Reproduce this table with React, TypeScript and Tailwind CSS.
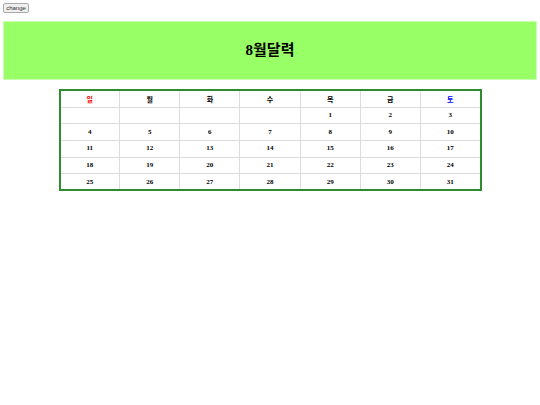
import React, { useState } from "react";

const days = ["일", "월", "화", "수", "목", "금", "토"];

function buildWeeks() {
  const cells: (number | null)[] = [null, null, null, null];
  for (let d = 1; d <= 31; d++) cells.push(d);
  const weeks: (number | null)[][] = [];
  for (let i = 0; i < cells.length; i += 7) weeks.push(cells.slice(i, i + 7));
  return weeks;
}

export default function App() {
  const [month, setMonth] = useState(8);
  const weeks = buildWeeks();

  return (
    <div className="min-h-[405px] bg-white font-['Liberation_Serif','Noto_Sans_CJK_KR',serif] text-black">
      <div className="px-[3px] pt-[3px]">
        <button
          onClick={() => setMonth(month === 8 ? 8 : 8)}
          className="flex h-[10px] w-[26px] items-center justify-center rounded-[2px] border border-[#aaa] bg-[#efefef] font-['Liberation_Sans',sans-serif] text-[6px] leading-none text-[#333]"
        >
          change
        </button>
      </div>
      <div className="mx-[3px] mt-[8px] flex h-[59px] items-center justify-center border border-[#c8ffb0] bg-[#99ff66]">
        <h1 className="text-[15px] font-bold leading-none">{month}월달력</h1>
      </div>
      <div className="mt-[9px] flex justify-center">
        <table className="w-[423px] table-fixed border-collapse border-2 border-[#2e8b2e] text-center text-[7px] font-bold">
          <thead>
            <tr className="h-[17px]">
              {days.map((d, i) => (
                <th
                  key={d}
                  className={`border border-[#dcdcdc] font-['Noto_Sans_CJK_KR',sans-serif] font-bold ${
                    i === 0 ? "text-[#ff0000]" : i === 6 ? "text-[#0000ff]" : "text-black"
                  }`}
                >
                  {d}
                </th>
              ))}
            </tr>
          </thead>
          <tbody>
            {weeks.map((w, wi) => (
              <tr key={wi} className="h-[16.7px]">
                {w.map((d, di) => (
                  <td key={di} className="border border-[#dcdcdc]">
                    {d ?? ""}
                  </td>
                ))}
              </tr>
            ))}
          </tbody>
        </table>
      </div>
    </div>
  );
}
